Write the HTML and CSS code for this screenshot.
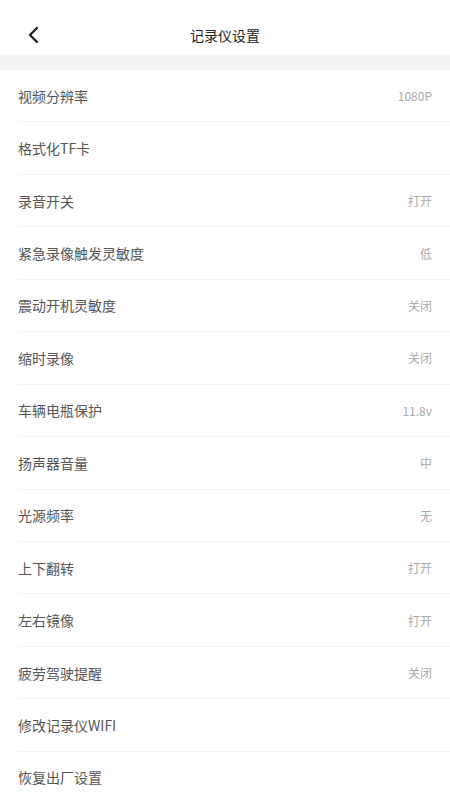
FILE: index.html
```html
<!DOCTYPE html>
<html lang="zh">
<head>
<meta charset="utf-8">
<link rel="stylesheet" href="styles.css">
</head>
<body>
<div class="page">
  <header class="nav">
    <svg class="back" width="14" height="18" viewBox="0 0 14 18"><path d="M11 2 L4 9 L11 16" fill="none" stroke="#222" stroke-width="2.4" stroke-linecap="round" stroke-linejoin="round"/></svg>
    <div class="title">记录仪设置</div>
  </header>
  <div class="band"></div>
  <ul class="list">
    <li class="row"><span class="label">视频分辨率</span><span class="value">1080P</span></li>
    <li class="row"><span class="label">格式化TF卡</span><span class="value"></span></li>
    <li class="row"><span class="label">录音开关</span><span class="value">打开</span></li>
    <li class="row"><span class="label">紧急录像触发灵敏度</span><span class="value">低</span></li>
    <li class="row"><span class="label">震动开机灵敏度</span><span class="value">关闭</span></li>
    <li class="row"><span class="label">缩时录像</span><span class="value">关闭</span></li>
    <li class="row"><span class="label">车辆电瓶保护</span><span class="value">11.8v</span></li>
    <li class="row"><span class="label">扬声器音量</span><span class="value">中</span></li>
    <li class="row"><span class="label">光源频率</span><span class="value">无</span></li>
    <li class="row"><span class="label">上下翻转</span><span class="value">打开</span></li>
    <li class="row"><span class="label">左右镜像</span><span class="value">打开</span></li>
    <li class="row"><span class="label">疲劳驾驶提醒</span><span class="value">关闭</span></li>
    <li class="row"><span class="label">修改记录仪WIFI</span><span class="value"></span></li>
    <li class="row"><span class="label">恢复出厂设置</span><span class="value"></span></li>
  </ul>
</div>
</body>
</html>
```
FILE: styles.css
```css
html, body {
  margin: 0;
  padding: 0;
  background: #fff;
}
body {
  font-family: "Noto Sans CJK SC", "Noto Sans", sans-serif;
  overflow: hidden;
}
.page {
  width: 450px;
  height: 800px;
  overflow: hidden;
}
.nav {
  height: 55px;
  position: relative;
  display: flex;
  align-items: center;
  justify-content: center;
}
.back {
  position: absolute;
  left: 26px;
  top: 26px;
}
.title {
  font-size: 14px;
  color: #222;
  margin-top: 14px;
}
.band {
  height: 15px;
  background: #f5f5f6;
}
.list {
  list-style: none;
  margin: 0;
  padding: 0 0 0 18px;
}
.row {
  height: 51.45px;
  border-bottom: 1px solid #f2f2f2;
  display: flex;
  align-items: center;
  justify-content: space-between;
  padding-right: 18px;
}
.label {
  font-size: 14px;
  color: #555;
}
.value {
  font-size: 12px;
  color: #aaa;
}
```
